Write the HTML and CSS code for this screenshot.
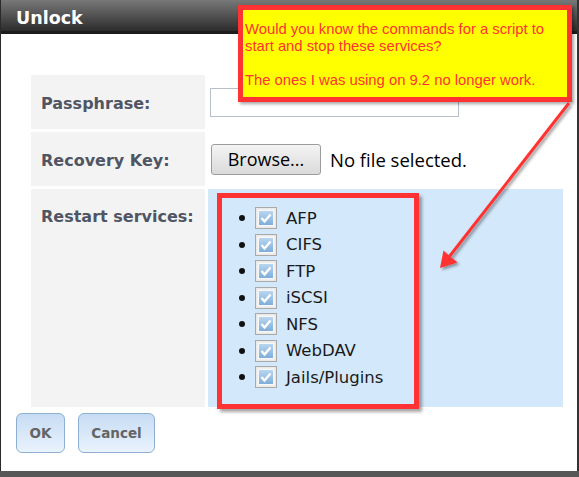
FILE: index.html
```html
<!DOCTYPE html>
<html lang="en">
<head>
    <meta charset="UTF-8">
    <meta name="viewport" content="width=device-width, initial-scale=1.0">
    <title>Unlock</title>
    <link rel="stylesheet" href="styles.css">
</head>
<body>
    <!-- Unlock dialog -->
    <div class="dialog">
        <div class="titlebar">Unlock</div>
        <div class="content">
            <form class="form-table" id="unlockForm">
                <label class="cell-label" for="passphrase">Passphrase:</label>
                <div class="cell-value">
                    <input type="password" id="passphrase" class="text-input">
                </div>

                <div class="cell-label">Recovery Key:</div>
                <div class="cell-value">
                    <span class="browse-btn">Browse...</span>
                    <span class="file-name">No file selected.</span>
                </div>

                <div class="cell-label top">Restart services:</div>
                <div class="cell-value services">
                    <div class="highlight">
                        <ul class="service-list">
                            <li><span class="check"></span>AFP</li>
                            <li><span class="check"></span>CIFS</li>
                            <li><span class="check"></span>FTP</li>
                            <li><span class="check"></span>iSCSI</li>
                            <li><span class="check"></span>NFS</li>
                            <li><span class="check"></span>WebDAV</li>
                            <li><span class="check"></span>Jails/Plugins</li>
                        </ul>
                    </div>
                </div>
            </form>
            <div class="buttons">
                <button class="btn btn-ok" type="button">OK</button>
                <button class="btn btn-cancel" type="button">Cancel</button>
            </div>
        </div>
    </div>

    <!-- Annotation callout and arrow drawn over the dialog -->
    <div class="callout">
        Would you know the commands for a script to<br>
        start and stop these services?<br>
        <br>
        The ones I was using on 9.2 no longer work.
    </div>
    <svg class="arrow" width="579" height="477" viewBox="0 0 579 477">
        <defs>
            <filter id="shadow" x="-20%" y="-20%" width="140%" height="140%">
                <feDropShadow dx="2" dy="2" stdDeviation="1.5" flood-color="#000" flood-opacity="0.4"/>
            </filter>
        </defs>
        <g filter="url(#shadow)">
            <line x1="569" y1="103" x2="449" y2="257" stroke="#ff3333" stroke-width="3"/>
            <polygon points="440,268 443.5,250.5 449.5,256 457.5,262.5" fill="#ff3333"/>
        </g>
    </svg>

    <script>
        // Draw the checked checkbox inside every service row
        const checkSvg = '<svg width="22" height="22" viewBox="0 0 22 22">' +
            '<defs><linearGradient id="cb" x1="0" y1="0" x2="0" y2="1">' +
            '<stop offset="0" stop-color="#b9d6f0"/><stop offset="1" stop-color="#7eaedb"/></linearGradient></defs>' +
            '<rect x="0.5" y="0.5" width="21" height="21" fill="#e9e9e9" stroke="#a9a9a9"/>' +
            '<rect x="2.5" y="2.5" width="17" height="17" fill="#f7f7f7" stroke="none"/>' +
            '<rect x="4" y="4" width="14" height="14" fill="url(#cb)"/>' +
            '<path d="M6.5 11 L9.5 14.5 L15.5 7.5" fill="none" stroke="#ffffff" stroke-width="2.4"/>' +
            '</svg>';
        document.querySelectorAll('.check').forEach(function (el) {
            el.innerHTML = checkSvg;
        });
    </script>
</body>
</html>
```

FILE: styles.css
```css
body {
    margin: 0;
    position: relative;
    width: 579px;
    height: 477px;
    background: #575757;
    overflow: hidden;
}
.dialog {
    width: 576px;
    height: 471px;
    background: #ffffff;
    border-left: 1px solid #2a2a2a;
    border-right: 2px solid #333333;
}
.titlebar {
    height: 34px;
    box-sizing: border-box;
    padding: 4px 0 0 15px;
    line-height: 28px;
    border-bottom: 3px solid #1c1c1c;
    background: linear-gradient(#787878, #2c2c2c);
    color: #ffffff;
    font-family: "DejaVu Sans", Verdana, sans-serif;
    font-weight: bold;
    font-size: 17.5px;
}
.content {
    padding-top: 41px;
}
.form-table {
    display: grid;
    grid-template-columns: 174px 355px;
    grid-template-rows: 54px 54px 218px;
    gap: 3px;
    margin: 0 0 0 30px;
}
.cell-label {
    display: flex;
    align-items: center;
    padding: 3px 0 0 10px;
    background: #f3f3f3;
    color: #4f5563;
    font-family: "DejaVu Sans", Verdana, sans-serif;
    font-weight: bold;
    font-size: 16px;
}
.cell-label.top {
    align-items: flex-start;
    padding-top: 18px;
    line-height: 20px;
}
.cell-value {
    display: flex;
    align-items: center;
}
.text-input {
    width: 249px;
    height: 29px;
    box-sizing: border-box;
    margin-left: 2px;
    border: 1px solid #b7bfcc;
    background: #ffffff;
}
.browse-btn {
    display: flex;
    align-items: center;
    justify-content: center;
    width: 110px;
    height: 31px;
    box-sizing: border-box;
    margin-left: 3px;
    border: 1px solid #9c9c9c;
    border-radius: 3px;
    background: linear-gradient(#f4f4f4, #dadada);
    font-family: "Open Sans", sans-serif;
    font-size: 18px;
    color: #000000;
}
.file-name {
    margin-left: 9px;
    font-family: "Open Sans", sans-serif;
    font-size: 18.5px;
    color: #000000;
}
.services {
    align-items: flex-start;
    background: #d4e8fb;
}
.highlight {
    width: 202px;
    height: 216px;
    box-sizing: border-box;
    margin: 4px 0 0 9px;
    border: 5px solid #ff3333;
    box-shadow: 3px 3px 3px rgba(0, 0, 0, 0.35);
}
.service-list {
    list-style: none;
    margin: 0;
    padding: 7px 0 0 0;
}
.service-list li {
    display: flex;
    align-items: center;
    height: 26.5px;
    padding-left: 17px;
    font-family: "DejaVu Sans", Verdana, sans-serif;
    font-size: 16.5px;
    color: #1a1a1a;
}
.service-list li::before {
    content: "";
    width: 6px;
    height: 6px;
    margin-right: 10px;
    border-radius: 50%;
    background: #111111;
}
.check {
    display: block;
    width: 22px;
    height: 22px;
    margin-right: 9px;
}
.check svg {
    display: block;
}
.buttons {
    display: flex;
    gap: 13px;
    margin-top: 6px;
    padding-left: 15px;
}
.btn {
    height: 40px;
    padding: 0;
    border: 1px solid #8db0d2;
    border-radius: 6px;
    background: linear-gradient(#c6dcf3, #eaf3fd);
    color: #646464;
    font-family: "DejaVu Sans", Verdana, sans-serif;
    font-weight: bold;
    font-size: 13.5px;
}
.btn-ok {
    width: 49px;
}
.btn-cancel {
    width: 77px;
}
.callout {
    position: absolute;
    left: 238px;
    top: 5px;
    width: 334px;
    height: 97px;
    box-sizing: border-box;
    padding: 11px 2px 0 2px;
    border: 5px solid #ff3333;
    background: #ffff00;
    box-shadow: 2px 2px 3px rgba(0, 0, 0, 0.35);
    color: #ff3333;
    font-family: "Liberation Sans", Arial, sans-serif;
    font-size: 14.8px;
    line-height: 17px;
}
.arrow {
    position: absolute;
    left: 0;
    top: 0;
    pointer-events: none;
}
```
